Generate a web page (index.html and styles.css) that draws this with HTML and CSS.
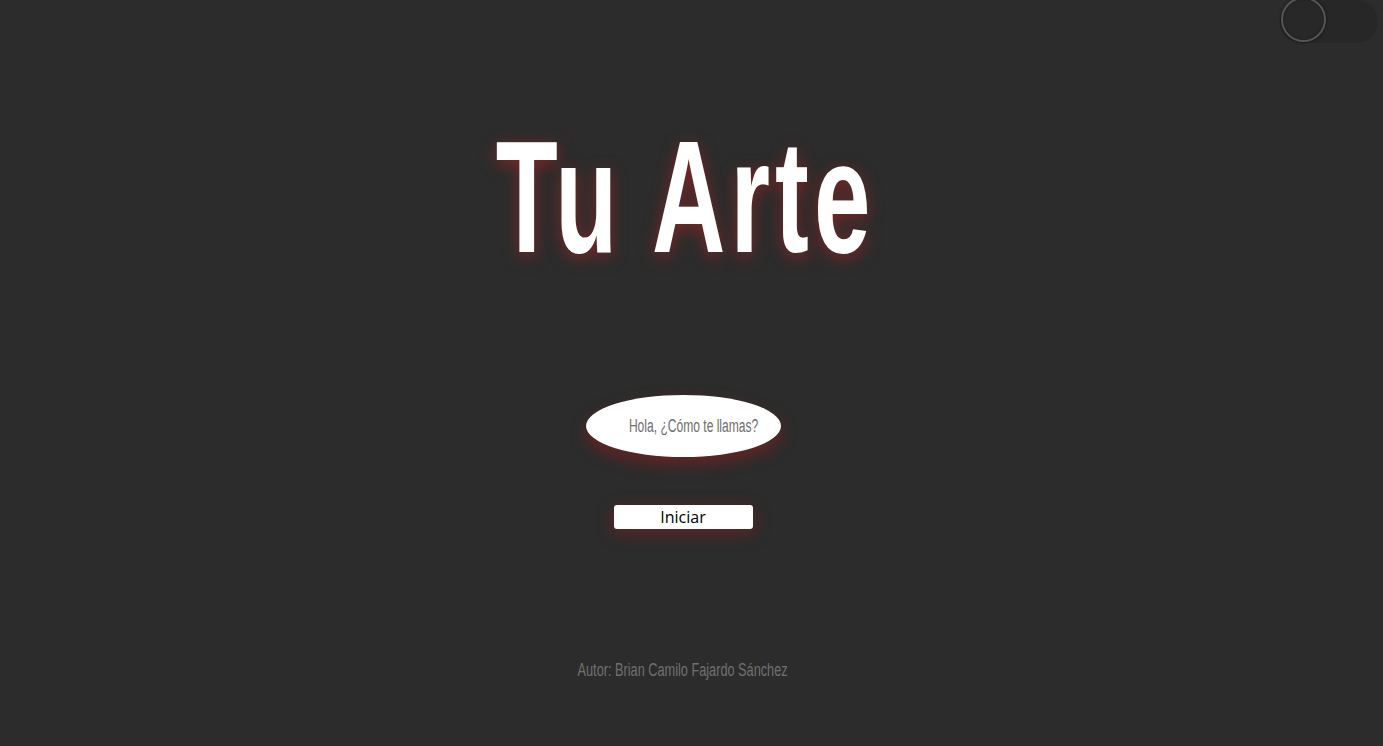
FILE: index.html
```html
<!DOCTYPE html>
<html lang="es">
<head>
<meta charset="utf-8">
<title>Tu Arte</title>
<link rel="stylesheet" href="styles.css">
</head>
<body>
<div class="toggle"><span class="knob"></span></div>
<main class="page">
  <h1 class="title">Tu Arte</h1>
  <input class="name" type="text" placeholder="Hola, ¿Cómo te llamas?">
  <button class="start" type="button">Iniciar</button>
  <p class="author">Autor: Brian Camilo Fajardo Sánchez</p>
</main>
</body>
</html>
```
FILE: styles.css
```css
html, body {
  margin: 0;
  padding: 0;
  height: 100%;
}
body {
  background: #2c2c2c;
  font-family: "Liberation Sans", Arial, sans-serif;
  overflow: hidden;
}
.toggle {
  position: absolute;
  top: 0;
  left: 1280px;
  width: 98px;
  height: 43px;
  border-radius: 22px;
  background: #272727;
}
.knob {
  position: absolute;
  left: 1px;
  top: -3px;
  width: 41px;
  height: 41px;
  border-radius: 50%;
  background: #282828;
  border: 2px solid #555;
  box-shadow: 0 0 3px rgba(0, 0, 0, 0.7), inset 0 0 2px rgba(0, 0, 0, 0.5);
}
.page {
  display: flex;
  flex-direction: column;
  align-items: center;
  padding-right: 17px;
}
.title {
  margin: 117px 0 0;
  font-weight: 700;
  font-size: 160px;
  line-height: 160px;
  letter-spacing: 8px;
  text-indent: 8px;
  color: #fff;
  text-shadow: 0 4px 20px rgba(175, 35, 35, 0.6);
  transform: scaleX(0.635);
  white-space: nowrap;
}
.name {
  margin-top: 118px;
  width: 291px;
  height: 62px;
  box-sizing: border-box;
  border: none;
  border-radius: 50%;
  background: #fff;
  padding: 0 0 0 64px;
  font-family: "Liberation Sans", Arial, sans-serif;
  font-size: 18px;
  color: #666;
  outline: none;
  box-shadow: 0 7px 18px rgba(140, 30, 30, 0.6);
  transform: scaleX(0.67);
}
.name::placeholder {
  color: #6e6e6e;
}
.start {
  margin-top: 48px;
  width: 139px;
  height: 24px;
  border: none;
  border-radius: 3px;
  background: #fff;
  color: #000;
  font-family: "Open Sans", sans-serif;
  font-size: 16px;
  line-height: 24px;
  padding: 0;
  box-shadow: 0 4px 16px rgba(140, 30, 30, 0.6);
}
.author {
  margin: 132px 0 0;
  font-size: 18px;
  line-height: 18px;
  color: #707070;
  white-space: nowrap;
  transform: scaleX(0.707);
}
```
